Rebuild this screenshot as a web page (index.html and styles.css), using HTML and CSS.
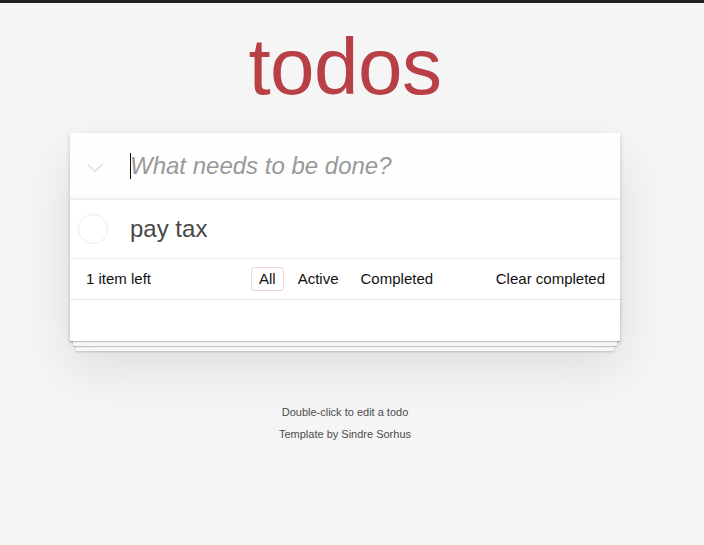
FILE: index.html
```html
<!DOCTYPE html>
<html lang="en">
<head>
<meta charset="utf-8">
<title>todos</title>
<link rel="stylesheet" href="styles.css">
</head>
<body>
<div class="topbar"></div>
<div class="page">
  <section class="todoapp">
    <h1 class="title">todos</h1>
    <div class="card">
      <header class="new-row">
        <span class="toggle-all">
          <svg width="18" height="10" viewBox="0 0 18 10"><path d="M1.5 1.5 L9 8 L16.5 1.5" fill="none" stroke="#e6e6e6" stroke-width="2"/></svg>
        </span>
        <span class="caret"></span>
        <input class="new-todo" placeholder="What needs to be done?">
      </header>
      <ul class="todo-list">
        <li class="todo">
          <span class="check"></span>
          <label class="todo-text">pay tax</label>
        </li>
      </ul>
      <footer class="footer">
        <span class="count">1 item left</span>
        <ul class="filters">
          <li><a class="filter selected">All</a></li>
          <li><a class="filter">Active</a></li>
          <li><a class="filter">Completed</a></li>
        </ul>
        <span class="clear">Clear completed</span>
      </footer>
      <div class="blank"></div>
    </div>
  </section>
  <footer class="info">
    <p>Double-click to edit a todo</p>
    <p>Template by Sindre Sorhus</p>
  </footer>
</div>
</body>
</html>
```

FILE: styles.css
```css
html, body {
  margin: 0;
  padding: 0;
}
body {
  background: #f5f5f5;
  font-family: "Liberation Sans", Arial, Helvetica, sans-serif;
  color: #4d4d4d;
  height: 545px;
  overflow: hidden;
}
.topbar {
  height: 3px;
  background: #222;
}
.page {
  width: 550px;
  margin-left: 70px;
}
.todoapp {
  display: flex;
  flex-direction: column;
}
.title {
  margin: 0;
  height: 130px;
  font-size: 80px;
  font-weight: normal;
  line-height: 80px;
  padding-top: 24px;
  box-sizing: border-box;
  text-align: center;
  color: #b83f45;
  letter-spacing: -0.5px;
}
.card {
  position: relative;
  z-index: 0;
  background: #fff;
  box-shadow: 0 2px 4px rgba(0,0,0,0.2), 0 25px 50px rgba(0,0,0,0.1);
  display: flex;
  flex-direction: column;
}
.new-row {
  position: relative;
  height: 66px;
  border-bottom: 1px solid #ededed;
  display: flex;
  align-items: center;
  background: rgba(0,0,0,0.003);
  box-shadow: inset 0 -2px 1px rgba(0,0,0,0.03);
}
.toggle-all {
  width: 50px;
  display: flex;
  justify-content: center;
  margin-top: 4px;
}
.caret {
  position: absolute;
  left: 60px;
  top: 20px;
  width: 1px;
  height: 26px;
  background: #111;
}
.new-todo {
  flex: 1;
  border: none;
  outline: none;
  background: transparent;
  font-family: inherit;
  font-size: 24px;
  padding: 0 16px 0 10px;
  color: #4d4d4d;
}
.new-todo::placeholder {
  font-style: italic;
  color: #999;
}
.todo-list {
  list-style: none;
  margin: 0;
  padding: 0;
}
.todo {
  height: 58px;
  border-bottom: 1px solid #ededed;
  display: flex;
  align-items: center;
}
.check {
  width: 28px;
  height: 28px;
  border: 1px solid #ededed;
  border-radius: 50%;
  margin-left: 8px;
}
.todo-text {
  font-size: 24px;
  color: #484848;
  margin-left: 22px;
}
.footer {
  height: 40px;
  border-bottom: 1px solid #e6e6e6;
  padding: 0 15px 0 16px;
  display: flex;
  align-items: center;
  font-size: 15px;
  line-height: 16px;
  color: #111;
}
.count {
  width: 162px;
  padding-bottom: 1px;
}
.filters {
  list-style: none;
  margin: 0;
  padding: 0;
  display: flex;
  flex: 1;
}
.filters li {
  margin: 0 3px;
}
.filter {
  display: block;
  padding: 3px 7px;
  border: 1px solid transparent;
  border-radius: 3px;
}
.filter.selected {
  border-color: rgba(175,47,47,0.2);
}
.clear {
  color: #111;
  padding-bottom: 1px;
}
.blank {
  height: 41px;
  position: relative;
}
.blank::after {
  content: "";
  position: absolute;
  left: 0;
  right: 0;
  bottom: 0;
  height: 41px;
  box-shadow: 0 1px 1px rgba(0,0,0,0.2), 0 8px 0 -3px #f6f6f6, 0 9px 1px -3px rgba(0,0,0,0.2), 0 16px 0 -6px #f6f6f6, 0 17px 2px -6px rgba(0,0,0,0.2);
  z-index: -1;
}
.info {
  margin-top: 66px;
  text-align: center;
  font-size: 11px;
  color: #4d4d4d;
}
.info p {
  margin: 0 0 11px;
  line-height: 11px;
}
```
